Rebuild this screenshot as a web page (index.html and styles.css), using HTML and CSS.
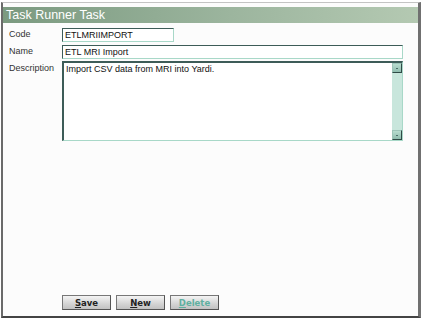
FILE: index.html
```html
<!DOCTYPE html>
<html lang="en">
<head>
  <meta charset="UTF-8">
  <title>Task Runner Task</title>
  <link rel="stylesheet" href="styles.css">
</head>
<body>
  <div class="frame">
    <div class="header">Task Runner Task</div>
    <div class="form">
      <div class="row">
        <label class="lbl" for="code">Code</label>
        <input type="text" id="code" class="field field-short" value="ETLMRIIMPORT">
      </div>
      <div class="row">
        <label class="lbl" for="name">Name</label>
        <input type="text" id="name" class="field" value="ETL MRI Import">
      </div>
      <div class="row">
        <label class="lbl">Description</label>
        <div class="memo">
          <div class="memo-text">Import CSV data from MRI into Yardi.</div>
          <div class="scroll">
            <div class="scroll-btn"></div>
            <div class="scroll-track"></div>
            <div class="scroll-btn"></div>
          </div>
        </div>
      </div>
    </div>
    <div class="buttons">
      <button class="btn"><u>S</u>ave</button>
      <button class="btn"><u>N</u>ew</button>
      <button class="btn btn-off"><u>D</u>elete</button>
    </div>
  </div>
</body>
</html>
```

FILE: styles.css
```css
html, body {
  margin: 0;
  padding: 0;
  background: #fff;
}
body {
  font-family: "Liberation Sans", Arial, sans-serif;
  font-size: 9px;
  color: #222;
}
.frame {
  margin: 2px 1px 0 1px;
  height: 313px;
  border-left: 2px solid #6a6a6a;
  border-top: 1px solid #c4c4c4;
  border-right: 3px solid #707070;
  border-bottom: 2px solid #444;
  background: #fcfcfc;
  display: flex;
  flex-direction: column;
}
.header {
  margin-top: 4px;
  height: 16px;
  line-height: 16px;
  padding-left: 3px;
  color: #fff;
  font-size: 12.5px;
  background: linear-gradient(to right, #7b9a80, #9cb59e 55%, #b4c9b2);
}
.form {
  padding: 5px 0 0 6px;
}
.row {
  display: flex;
  align-items: flex-start;
  margin-bottom: 3px;
}
.lbl {
  width: 53px;
  padding-top: 1px;
  color: #333;
}
.field {
  box-sizing: border-box;
  width: 341px;
  height: 14px;
  margin: 0;
  padding: 0 2px;
  font-family: "Liberation Sans", Arial, sans-serif;
  font-size: 9px;
  color: #111;
  background: #fff;
  border: 1px solid #a8d8c8;
  border-top-color: #3d5c58;
  border-left-color: #3d5c58;
  outline: none;
}
.field-short {
  width: 112px;
}
.memo {
  box-sizing: border-box;
  width: 341px;
  height: 80px;
  margin-top: -1px;
  display: flex;
  background: #fff;
  border: 1px solid #a8d8c8;
  border-top: 2px solid #3d5c58;
  border-left: 2px solid #3d5c58;
}
.memo-text {
  flex: 1;
  padding: 1px 2px;
  font-size: 9px;
  color: #111;
}
.scroll {
  width: 10px;
  display: flex;
  flex-direction: column;
  background: #bde0d4;
}
.scroll-btn {
  box-sizing: border-box;
  height: 10px;
  display: flex;
  align-items: center;
  justify-content: center;
  background: linear-gradient(to bottom, #b8dccf, #8fbcae);
  border: 1px solid #2f4a46;
  border-top-color: #9cc4b8;
  border-left-color: #9cc4b8;
}
.scroll-btn::after {
  content: "";
  width: 2px;
  height: 1px;
  background: #4a6e68;
}
.scroll-track {
  flex: 1;
  background: #c8e6dc;
}
.buttons {
  margin-top: auto;
  margin-bottom: 6px;
  padding-left: 59px;
  display: flex;
  gap: 5px;
}
.btn {
  box-sizing: border-box;
  width: 49px;
  height: 15px;
  padding: 0;
  font-family: "DejaVu Sans", Verdana, sans-serif;
  font-size: 8.5px;
  font-weight: bold;
  color: #222;
  background: linear-gradient(to bottom, #f4f4f4, #d4d4d4 60%, #c2c2c2);
  border: 1px solid #555;
  border-top-color: #777;
  border-left-color: #777;
}
.btn-off {
  color: #5fb0a0;
}
```
